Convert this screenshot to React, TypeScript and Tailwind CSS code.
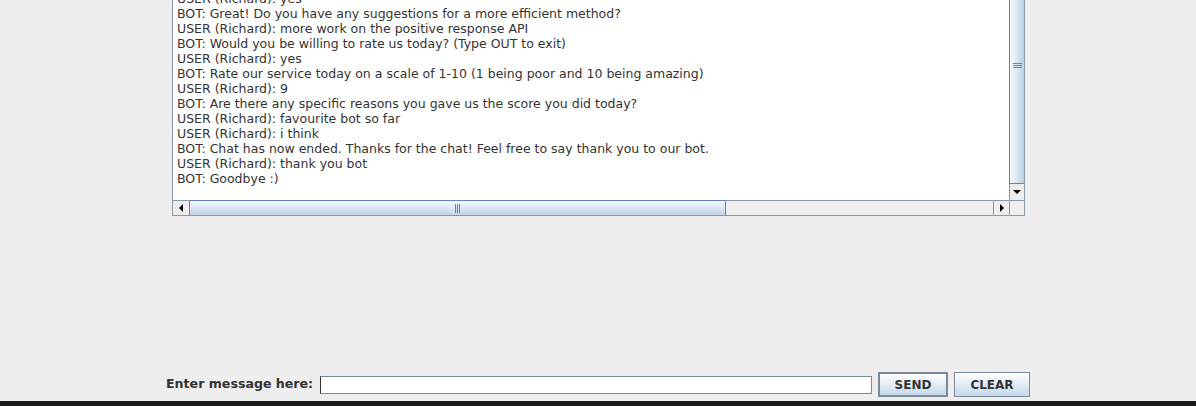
import React from "react";

const lines = [
  "USER (Richard): yes",
  "BOT: Great! Do you have any suggestions for a more efficient method?",
  "USER (Richard): more work on the positive response API",
  "BOT: Would you be willing to rate us today? (Type OUT to exit)",
  "USER (Richard): yes",
  "BOT: Rate our service today on a scale of 1-10 (1 being poor and 10 being amazing)",
  "USER (Richard): 9",
  "BOT: Are there any specific reasons you gave us the score you did today?",
  "USER (Richard): favourite bot so far",
  "USER (Richard): i think",
  "BOT: Chat has now ended. Thanks for the chat! Feel free to say thank you to our bot.",
  "USER (Richard): thank you bot",
  "BOT: Goodbye :)",
];

function Tri({ dir }: { dir: "down" | "left" | "right" }) {
  const pts =
    dir === "down" ? "0,0 8,0 4,4" : dir === "left" ? "4,0 4,8 0,4" : "0,0 0,8 4,4";
  const w = dir === "down" ? 8 : 4;
  const h = dir === "down" ? 4 : 8;
  return (
    <svg width={w} height={h} viewBox={`0 0 ${w} ${h}`}>
      <polygon points={pts} fill="#000" />
    </svg>
  );
}

export default function App() {
  return (
    <div
      className="w-[1196px] h-[406px] bg-[#eeeeee] flex flex-col overflow-hidden"
      style={{ fontFamily: '"DejaVu Sans", sans-serif' }}
    >
      {/* Scroll pane */}
      <div className="ml-[172px] w-[853px] h-[216px] border-l border-r border-b border-[#8a99a6] flex flex-col">
        <div className="flex h-[200px]">
          <div className="w-[836px] bg-white overflow-hidden">
            <div className="-mt-[9px] pl-[4px] text-[12.5px] leading-[15px] text-[#333333] whitespace-nowrap">
              {lines.map((l, i) => (
                <div key={i}>{l}</div>
              ))}
            </div>
          </div>
          {/* vertical scrollbar */}
          <div className="w-[15px] flex flex-col">
            <div className="h-[184px] border-l border-b border-[#6382bf] bg-gradient-to-r from-[#f4f8fc] via-[#dce7f3] to-[#b9cfe6] flex flex-col items-center pt-[63px]">
              <div className="flex flex-col gap-[1px]">
                <div className="w-[9px] h-[1px] bg-[#6382bf]" />
                <div className="w-[9px] h-[1px] bg-[#6382bf]" />
                <div className="w-[9px] h-[1px] bg-[#6382bf]" />
              </div>
            </div>
            <div className="h-[16px] border-l border-[#8a99a6] bg-[#eeeeee] flex items-center justify-center">
              <Tri dir="down" />
            </div>
          </div>
        </div>
        <div className="flex h-[15px]">
          <div className="w-[836px] flex border-t border-[#8a99a6]">
            <div className="w-[16px] bg-[#eeeeee] flex items-center justify-center">
              <Tri dir="left" />
            </div>
            <div className="w-[537px] border-l border-r border-[#6382bf] bg-gradient-to-b from-[#f4f8fc] via-[#dce7f3] to-[#bfd3e8] flex items-center justify-center -mt-[1px] border-t">
              <div className="flex gap-[1px]">
                <div className="w-[1px] h-[9px] bg-[#6382bf]" />
                <div className="w-[1px] h-[9px] bg-[#6382bf]" />
                <div className="w-[1px] h-[9px] bg-[#6382bf]" />
              </div>
            </div>
            <div className="flex-1 bg-[#eeeeee]" />
            <div className="w-[16px] border-l border-[#8a99a6] bg-[#eeeeee] flex items-center justify-center">
              <Tri dir="right" />
            </div>
          </div>
          <div className="w-[15px] border-l border-t border-[#8a99a6] bg-[#eeeeee]" />
        </div>
      </div>

      <div className="flex-1" />

      {/* bottom row */}
      <div className="flex items-center h-[25px] mb-[4px]">
        <div className="ml-[166px] w-[154px] text-[12.6px] font-bold text-[#333333] whitespace-nowrap">
          Enter message here:
        </div>
        <div className="w-[552px] h-[18px] bg-white border border-[#7a8a99] border-l-[#333333]" />
        <button className="ml-[6px] w-[70px] h-[25px] border-2 border-[#7a8a99] bg-gradient-to-b from-[#ffffff] to-[#c6d7ea] text-[12px] font-bold text-[#333333] flex items-center justify-center">
          SEND
        </button>
        <button className="ml-[6px] w-[76px] h-[25px] border border-[#7a8a99] bg-gradient-to-b from-[#ffffff] to-[#c6d7ea] text-[12px] font-bold text-[#333333] flex items-center justify-center">
          CLEAR
        </button>
      </div>
      <div className="h-[5px] bg-[#1b1b1b]" />
    </div>
  );
}
